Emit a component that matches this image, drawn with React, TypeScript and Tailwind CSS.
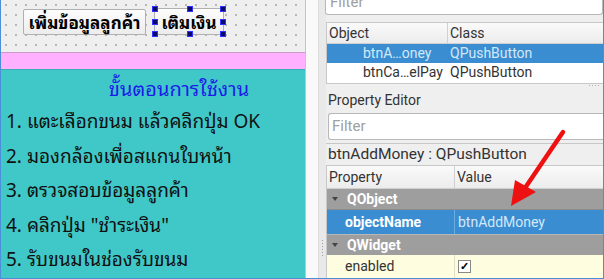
import React from "react";

const thai = "font-['Noto_Sans_Thai_Looped','Tahoma','Garuda','Loma','Noto_Sans_Thai','Noto_Sans',sans-serif]";
const ui = "font-['Roboto','Noto_Sans',sans-serif]";

const steps = [
  "1. แตะเลือกขนม แล้วคลิกปุ่ม OK",
  "2. มองกล้องเพื่อสแกนใบหน้า",
  "3. ตรวจสอบข้อมูลลูกค้า",
  '4. คลิกปุ่ม "ชำระเงิน"',
  "5. รับขนมในช่องรับขนม",
];

const Handle = ({ className }: { className: string }) => (
  <span className={`absolute w-[6px] h-[6px] bg-[#0a0a6a] border border-[#3030ff] ${className}`} />
);

const FormDesigner = () => (
  <div className="w-[305px] shrink-0 flex flex-col border-r border-[#c4c4c4]">
    <div className="h-[52px] bg-[#efefef] bg-[radial-gradient(#b8b8b8_0.8px,transparent_1px)] bg-[length:10px_10px] bg-[position:0px_0px] flex items-start gap-[8px] pl-[22px] pt-[9px]">
      <div className={`h-[26px] w-[123px] flex items-center justify-center border border-[#b0b0b0] rounded-[2px] bg-gradient-to-b from-[#fdfdfd] to-[#ececec] text-[17px] font-bold text-black ${thai}`}>
        เพิ่มข้อมูลลูกค้า
      </div>
      <div className={`relative h-[27px] w-[70px] -mt-[1px] flex items-center justify-center border border-[#b0b0b0] rounded-[2px] bg-gradient-to-b from-[#fdfdfd] to-[#ececec] text-[17px] font-bold text-black ${thai}`}>
        เติมเงิน
        <Handle className="-left-[3px] -top-[3px]" />
        <Handle className="left-[32px] -top-[3px]" />
        <Handle className="-right-[3px] -top-[3px]" />
        <Handle className="-left-[3px] top-[10px]" />
        <Handle className="-right-[3px] top-[10px]" />
        <Handle className="-left-[3px] -bottom-[3px]" />
        <Handle className="left-[32px] -bottom-[3px]" />
        <Handle className="-right-[3px] -bottom-[3px]" />
      </div>
    </div>
    <div className="h-[17px] bg-[#ffb0ff] border-t border-[#c89ac8]" />
    <div className={`flex-1 bg-[#40c8c8] border-t border-[#38b0b0] ${thai}`}>
      <div className="text-center text-[#1c1ce8] text-[20px] leading-[32px] pt-[1px] pl-[52px]">ขั้นตอนการใช้งาน</div>
      <div className="flex flex-col pl-[5px] text-[#111] text-[19px]">
        {steps.map((s) => (
          <div key={s} className="h-[34.5px] leading-[34px] whitespace-nowrap">
            {s}
          </div>
        ))}
      </div>
    </div>
  </div>
);

const Splitter = () => (
  <>
    <div className="w-[12px] shrink-0 bg-[#f9f9f9]" />
    <div className="w-[8px] shrink-0 bg-[#e9e9e9] border-l border-[#dcdcdc] flex flex-col justify-end items-center pb-[22px]">
      <div className="flex flex-col gap-[2px]">
        {[0, 1, 2, 3, 4, 5].map((i) => (
          <span key={i} className="w-[1px] h-[1px] bg-[#a0a0a0]" />
        ))}
      </div>
    </div>
  </>
);

const Arrow = () => (
  <svg className="absolute left-[180px] top-[128px]" width="70" height="84" viewBox="0 0 70 84">
    <line x1="57" y1="4" x2="19" y2="60" stroke="#ee1111" strokeWidth="4.5" strokeLinecap="round" />
    <polygon points="5,78 9,52 30,64" fill="#ee1111" />
  </svg>
);

const Inspector = () => (
  <div className={`relative flex-1 bg-[#efefef] flex flex-col text-[14px] text-[#333] ${ui}`}>
    <div className="h-[15px] -ml-[1px] bg-white border-x border-b border-[#b8b8b8] rounded-b-[3px] overflow-hidden">
      <div className="text-[#a0a0a0] text-[15px] leading-[15px] -mt-[5px] pl-[4px]">Filter</div>
    </div>
    <div className="mt-[7px] h-[62px] bg-white border border-[#c8c8c8] border-r-0">
      <div className="h-[21px] flex bg-gradient-to-b from-[#fafafa] to-[#ececec] border-b border-[#d0d0d0] leading-[21px]">
        <div className="w-[121px] pl-[2px] border-r border-[#d0d0d0]">Object</div>
        <div className="pl-[2px]">Class</div>
      </div>
      <div className="h-[19px] flex bg-[#3a8dd0] text-[#d4e8fa] leading-[19px]">
        <div className="w-[121px] pl-[36px]">btnA…oney</div>
        <div className="pl-[2px]">QPushButton</div>
      </div>
      <div className="h-[19px] flex leading-[19px]">
        <div className="w-[121px] pl-[36px]">btnCa…elPay</div>
        <div className="pl-[2px]">QPushButton</div>
      </div>
    </div>
    <div className="h-[3px] flex justify-end pr-[4px] gap-[2px] items-center">
      {[0, 1, 2, 3].map((i) => (
        <span key={i} className="w-[1px] h-[1px] bg-[#b0b0b0]" />
      ))}
    </div>
    <div className="h-[26px] leading-[26px] pl-[2px]">Property Editor</div>
    <div className="ml-[2px] h-[27px] bg-white border border-[#b8b8b8] border-r-0 rounded-l-[3px] leading-[25px] pl-[3px] text-[#a0a0a0] text-[15px]">
      Filter
    </div>
    <div className="mt-[3px] h-[22px] border-t border-[#c8c8c8] leading-[21px] pl-[2px] text-[15.5px]">btnAddMoney : QPushButton</div>
    <div className="flex-1 bg-white border border-[#c8c8c8] border-r-0 border-b-0 flex flex-col">
      <div className="h-[23px] flex bg-gradient-to-b from-[#fafafa] to-[#ececec] border-b border-[#d0d0d0] leading-[23px]">
        <div className="w-[128px] pl-[2px] border-r border-[#d0d0d0]">Property</div>
        <div className="pl-[2px]">Value</div>
      </div>
      <div className="h-[21px] flex items-center bg-[#9e9e9e] text-white font-bold border-b border-[#8c8c8c]">
        <span className="w-0 h-0 ml-[5px] mr-[9px] border-x-[3.5px] border-x-transparent border-t-[4px] border-t-[#444]" />
        QObject
      </div>
      <div className="h-[24px] flex bg-[#3a8dd0] leading-[24px]">
        <div className="w-[128px] pl-[18px] font-bold text-white border-r border-[#6aaee0]">objectName</div>
        <div className="pl-[3px] text-[#d4e8fa]">btnAddMoney</div>
      </div>
      <div className="h-[21px] flex items-center bg-[#9e9e9e] text-white font-bold border-t border-[#b8b8b8]">
        <span className="w-0 h-0 ml-[5px] mr-[9px] border-x-[3.5px] border-x-transparent border-t-[4px] border-t-[#444]" />
        QWidget
      </div>
      <div className="flex-1 flex bg-[#fefde0] leading-[22px]">
        <div className="w-[128px] pl-[18px] border-r border-[#e0e0c8]">enabled</div>
        <div className="pl-[3px] flex items-center">
          <span className="w-[13px] h-[13px] bg-white border border-[#888] flex items-center justify-center text-[11px] leading-none font-bold text-black">
            ✓
          </span>
        </div>
      </div>
    </div>
    <Arrow />
  </div>
);

export default function App() {
  return (
    <div className="w-[604px] h-[279px] flex overflow-hidden border-l border-r border-b border-[#4a8fd8] bg-[#efefef]">
      <FormDesigner />
      <Splitter />
      <Inspector />
    </div>
  );
}
